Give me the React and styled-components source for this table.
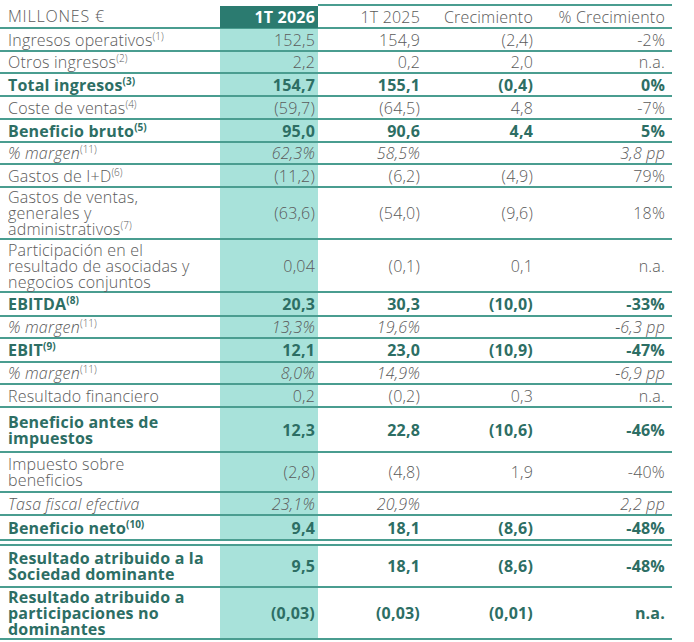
import React from 'react';
import styled, { createGlobalStyle } from 'styled-components';

const GlobalStyle = createGlobalStyle`
  body {
    margin: 0;
    background: #fff;
    font-family: "Open Sans", "Liberation Sans", sans-serif;
  }
`;

const rows = [
  { label: ['Ingresos operativos'], sup: '(1)', v: ['152,5', '154,9', '(2,4)', '-2%'], h: 23 },
  { label: ['Otros ingresos'], sup: '(2)', v: ['2,2', '0,2', '2,0', 'n.a.'], h: 22 },
  { label: ['Total ingresos'], sup: '(3)', v: ['154,7', '155,1', '(0,4)', '0%'], h: 23, kind: 'bold' },
  { label: ['Coste de ventas'], sup: '(4)', v: ['(59,7)', '(64,5)', '4,8', '-7%'], h: 23 },
  { label: ['Beneficio bruto'], sup: '(5)', v: ['95,0', '90,6', '4,4', '5%'], h: 23, kind: 'bold' },
  { label: ['% margen'], sup: '(11)', v: ['62,3%', '58,5%', '', '3,8 pp'], h: 22, kind: 'italic' },
  { label: ['Gastos de I+D'], sup: '(6)', v: ['(11,2)', '(6,2)', '(4,9)', '79%'], h: 23 },
  { label: ['Gastos de ventas,', 'generales y', 'administrativos'], sup: '(7)', v: ['(63,6)', '(54,0)', '(9,6)', '18%'], h: 52 },
  { label: ['Participación en el', 'resultado de asociadas y', 'negocios conjuntos'], v: ['0,04', '(0,1)', '0,1', 'n.a.'], h: 53 },
  { label: ['EBITDA'], sup: '(8)', v: ['20,3', '30,3', '(10,0)', '-33%'], h: 24, kind: 'bold' },
  { label: ['% margen'], sup: '(11)', v: ['13,3%', '19,6%', '', '-6,3 pp'], h: 22, kind: 'italic' },
  { label: ['EBIT'], sup: '(9)', v: ['12,1', '23,0', '(10,9)', '-47%'], h: 24, kind: 'bold' },
  { label: ['% margen'], sup: '(11)', v: ['8,0%', '14,9%', '', '-6,9 pp'], h: 22, kind: 'italic' },
  { label: ['Resultado financiero'], v: ['0,2', '(0,2)', '0,3', 'n.a.'], h: 23 },
  { label: ['Beneficio antes de', 'impuestos'], v: ['12,3', '22,8', '(10,6)', '-46%'], h: 45, kind: 'bold' },
  { label: ['Impuesto sobre', 'beneficios'], v: ['(2,8)', '(4,8)', '1,9', '-40%'], h: 40 },
  { label: ['Tasa fiscal efectiva'], v: ['23,1%', '20,9%', '', '2,2 pp'], h: 23, kind: 'italic' },
  { label: ['Beneficio neto'], sup: '(10)', v: ['9,4', '18,1', '(8,6)', '-48%'], h: 30, kind: 'bold', double: true },
  { label: ['Resultado atribuido a la', 'Sociedad dominante'], v: ['9,5', '18,1', '(8,6)', '-48%'], h: 42, kind: 'bold' },
  { label: ['Resultado atribuido a', 'participaciones no', 'dominantes'], v: ['(0,03)', '(0,03)', '(0,01)', 'n.a.'], h: 52, kind: 'bold' },
];

function App() {
  return (
    <>
      <GlobalStyle />
      <Table>
        <HeadRow>
          <HeadLabel>MILLONES €</HeadLabel>
          <HeadCurrent>1T 2026</HeadCurrent>
          <HeadCell>1T 2025</HeadCell>
          <HeadCell>Crecimiento</HeadCell>
          <HeadCell>% Crecimiento</HeadCell>
        </HeadRow>
        {rows.map((row, i) => (
          <Row key={i} $h={row.h} $double={row.double} $kind={row.kind}>
            <Label>
              {row.label.map((line, j) => (
                <span key={j}>
                  {line}
                  {j === row.label.length - 1 && row.sup && <Sup>{row.sup}</Sup>}
                </span>
              ))}
            </Label>
            {row.v.map((val, j) => (
              <Num key={j} $current={j === 0}>{val}</Num>
            ))}
          </Row>
        ))}
      </Table>
    </>
  );
}

export default App;

const Table = styled.div`
  width: 672px;
  padding-top: 4px;
`;

const cols = `
  display: grid;
  grid-template-columns: 220px 98px 106px 113px 135px;
`;

const HeadRow = styled.div`
  ${cols}
  height: 25px;
  box-sizing: border-box;
  border-bottom: 2px solid #4a9d90;
  font-size: 16px;
  letter-spacing: 0.2px;
  color: #5a5a5a;
  font-weight: 300;
`;

const HeadLabel = styled.div`
  display: flex;
  align-items: center;
  padding-left: 8px;
  letter-spacing: 0.8px;
`;

const HeadCell = styled.div`
  display: flex;
  align-items: center;
  justify-content: flex-end;
  padding-right: 4px;
  border-top: 2px solid #4a9d90;
  &:last-child {
    padding-right: 7px;
  }
`;

const HeadCurrent = styled(HeadCell)`
  border-top: none;
  margin-top: 2px;
  background: #2b7b70;
  color: #fff;
  font-weight: 700;
  padding-right: 3px;
`;

const Row = styled.div`
  ${cols}
  height: ${(p) => p.$h}px;
  box-sizing: border-box;
  border-bottom: ${(p) => (p.$double ? '7px double #4a9d90' : '2px solid #4a9d90')};
  font-size: 16px;
  letter-spacing: 0.2px;
  line-height: 16px;
  color: ${(p) => (p.$kind === 'bold' ? '#2d6e64' : '#5a5a5a')};
  font-weight: ${(p) => (p.$kind === 'bold' ? 700 : 300)};
  font-style: ${(p) => (p.$kind === 'italic' ? 'italic' : 'normal')};
`;

const Label = styled.div`
  display: flex;
  flex-direction: column;
  justify-content: center;
  padding-left: 8px;
  white-space: nowrap;
`;

const Sup = styled.sup`
  font-size: 10px;
  line-height: 0;
  letter-spacing: 0;
  vertical-align: 6px;
  font-style: normal;
`;

const Num = styled.div`
  display: flex;
  align-items: center;
  justify-content: flex-end;
  padding-right: ${(p) => (p.$current ? 3 : 4)}px;
  background: ${(p) => (p.$current ? '#a8e2da' : 'transparent')};
  &:last-child {
    padding-right: 7px;
  }
`;
